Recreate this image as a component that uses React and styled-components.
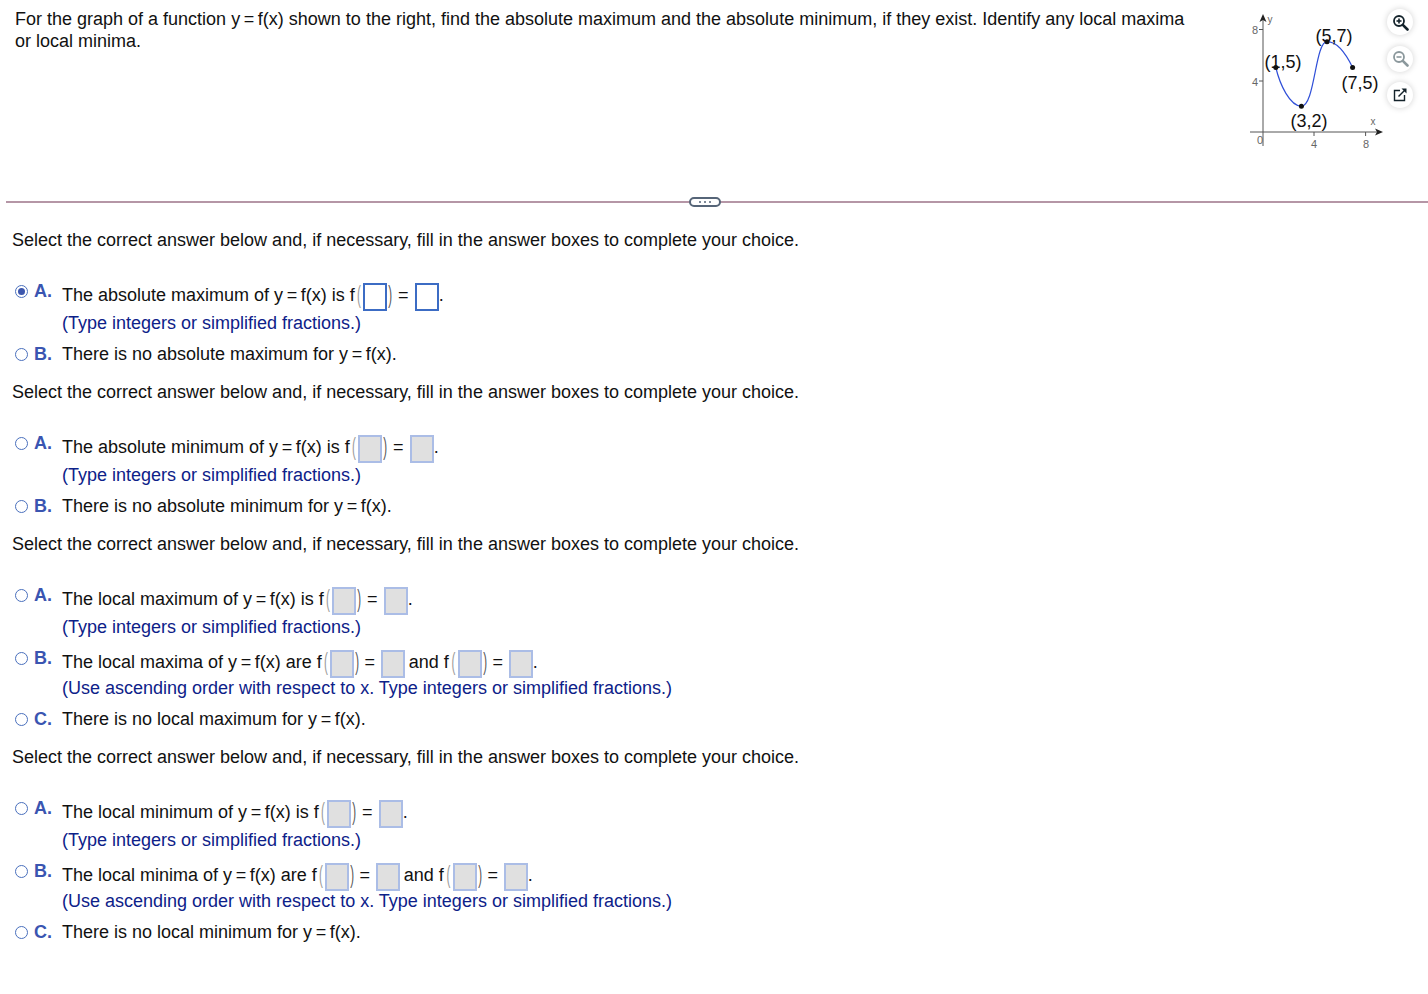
import React from 'react';
import styled, { createGlobalStyle } from 'styled-components';

const GlobalStyle = createGlobalStyle`
  html, body { margin: 0; padding: 0; background: #fff; }
  body {
    font-family: "Liberation Sans", Arial, sans-serif;
    font-size: 18px;
    color: #111;
  }
`;

const Page = styled.div`
  width: 1428px;
  height: 994px;
  overflow: hidden;
`;

const Header = styled.header`
  display: flex;
  height: 196px;
  padding-left: 15px;
`;

const Question = styled.p`
  width: 1228px;
  margin: 8px 0 0;
  padding-right: 40px;
  box-sizing: border-box;
  line-height: 22px;
`;

const GraphSvg = styled.svg`
  display: block;
  width: 143px;
  height: 160px;
  flex: none;
  text { font-family: "Liberation Sans", Arial, sans-serif; }
`;

const Tools = styled.div`
  display: flex;
  flex-direction: column;
  gap: 10.500px;
  padding: 9px 0 0 1px;
`;

const ToolButton = styled.button`
  width: 26px;
  height: 26px;
  padding: 0;
  border: 0;
  border-radius: 50%;
  background: #fff;
  box-shadow: 0 0 6px rgba(0, 0, 0, 0.18);
  display: flex;
  align-items: center;
  justify-content: center;
  color: ${p => (p.$muted ? '#8b989c' : '#14232b')};
`;

const Divider = styled.div`
  position: relative;
  height: 2px;
  margin: 5px 0 0 6px;
  background: #b596a6;
`;

const Pill = styled.div`
  position: absolute;
  left: 683px;
  top: -4px;
  width: 32px;
  height: 10px;
  box-sizing: border-box;
  border: 2px solid #566578;
  border-radius: 5px;
  background: #fff;
  display: flex;
  align-items: center;
  justify-content: center;
  gap: 3px;
  i {
    width: 2px;
    height: 2px;
    border-radius: 50%;
    background: #566578;
  }
`;

const Sections = styled.div`
  padding-top: 26px;
`;

const Section = styled.section`
  padding: 0 0 12px 12px;
`;

const Prompt = styled.p`
  margin: 0 0 29px;
  line-height: 22px;
`;

const Option = styled.div`
  display: grid;
  grid-template-columns: 22px 28px 1fr;
  margin-top: ${p => p.$top || 0}px;
`;

const Radio = styled.span`
  width: 13px;
  height: 13px;
  margin: ${p => (p.$lift ? 5 : 9)}px 0 0 3px;
  box-sizing: border-box;
  border: 1.500px solid #4a70bd;
  border-radius: 50%;
  background: #fff;
  display: flex;
  align-items: center;
  justify-content: center;
  &::after {
    content: '';
    display: ${p => (p.$checked ? 'block' : 'none')};
    width: 7px;
    height: 7px;
    border-radius: 50%;
    background: #3d57ad;
  }
`;

const Letter = styled.span`
  font-weight: 700;
  color: #3a55b1;
  line-height: 30px;
  margin-top: ${p => (p.$lift ? -4 : 0)}px;
`;

const Content = styled.div`
  min-width: 0;
`;

const Line = styled.div`
  height: 30px;
  line-height: 30px;
  display: flex;
  align-items: center;
  white-space: pre;
`;

const Note = styled.div`
  color: #0d2189;
  line-height: 24px;
  margin-top: ${p => p.$top}px;
`;

const AnswerBox = styled.span`
  flex: none;
  align-self: flex-end;
  width: 24px;
  height: 28px;
  margin-bottom: -1px;
  box-sizing: border-box;
  border: 2px solid ${p => (p.$active ? '#3c6cc4' : '#abbde6')};
  background: ${p => (p.$active ? '#fff' : '#e0e0e0')};
`;

const Paren = styled.span`
  flex: none;
  width: ${p => p.$w}px;
  font-size: 23px;
  color: ${p => p.$color};
  transform: scaleX(0.5);
  line-height: 27px;
  text-align: center;
`;

const Gap = styled.span`
  flex: none;
  width: ${p => p.$w}px;
  text-align: center;
`;

function Boxes({ active, prefix, lead, eq }) {
  return (
    <>
      <span>{prefix}</span>
      <Paren $w={lead} $color="#999">(</Paren>
      <AnswerBox $active={active} />
      <Paren $w={5} $color="#555">)</Paren>
      <Gap $w={eq}>=</Gap>
      <AnswerBox $active={active} />
    </>
  );
}

function Expression({ parts, active }) {
  return (
    <Line>
      <Boxes active={active} prefix={parts[0]} lead={8} eq={parts[1] ? 22 : 23} />
      {parts[1] ? (
        <>
          <Gap $w={4} />
          <Boxes prefix={parts[1]} lead={9} eq={22} />
        </>
      ) : null}
      <span>.</span>
    </Line>
  );
}

function Magnifier({ plus, minus }) {
  return (
    <svg width="17" height="17" viewBox="0 0 17 17" fill="none" stroke="currentColor">
      <circle cx="7" cy="7" r="5" strokeWidth="1.800" />
      <path d="M10.800 10.800L15.500 15.500" strokeWidth="2.600" strokeLinecap="round" />
      {minus ? <path d="M4.500 7H9.500" strokeWidth="1.600" /> : null}
      {plus ? <path d="M7 4.500V9.500" strokeWidth="1.600" /> : null}
    </svg>
  );
}

function PopOut() {
  return (
    <svg width="16" height="16" viewBox="0 0 16 16" fill="none" stroke="currentColor">
      <path d="M8 3.500H2.500V13.500H12.500V8" strokeWidth="1.400" />
      <path d="M6.500 9.500L12.500 3.500" strokeWidth="1.400" />
      <path d="M9.500 1.500H14.500V6.500z" fill="currentColor" stroke="none" />
    </svg>
  );
}

const QUESTION = 'For the graph of a function y\u2009=\u2009f(x) shown to the right, find the absolute maximum and the absolute minimum, if they exist. Identify any local maxima or local minima.';
const TYPE_NOTE = '(Type integers or simplified fractions.)';
const ORDER_NOTE = '(Use ascending order with respect to x. Type integers or simplified fractions.)';

const SECTIONS = [
  [
    { letter: 'A.', checked: true, lift: true, active: true, parts: ['The absolute maximum of y\u2009=\u2009f(x) is f'], note: TYPE_NOTE, noteTop: 1 },
    { letter: 'B.', top: 4, text: 'There is no absolute maximum for y\u2009=\u2009f(x).' },
  ],
  [
    { letter: 'A.', lift: true, parts: ['The absolute minimum of y\u2009=\u2009f(x) is f'], note: TYPE_NOTE, noteTop: 1 },
    { letter: 'B.', top: 4, text: 'There is no absolute minimum for y\u2009=\u2009f(x).' },
  ],
  [
    { letter: 'A.', lift: true, parts: ['The local maximum of y\u2009=\u2009f(x) is f'], note: TYPE_NOTE, noteTop: 1 },
    { letter: 'B.', lift: true, top: 8, parts: ['The local maxima of y\u2009=\u2009f(x) are f', 'and f'], note: ORDER_NOTE, noteTop: -1 },
    { letter: 'C.', top: 4, text: 'There is no local maximum for y\u2009=\u2009f(x).' },
  ],
  [
    { letter: 'A.', lift: true, parts: ['The local minimum of y\u2009=\u2009f(x) is f'], note: TYPE_NOTE, noteTop: 1 },
    { letter: 'B.', lift: true, top: 8, parts: ['The local minima of y\u2009=\u2009f(x) are f', 'and f'], note: ORDER_NOTE, noteTop: -1 },
    { letter: 'C.', top: 4, text: 'There is no local minimum for y\u2009=\u2009f(x).' },
  ],
];

function Graph() {
  const axis = '#555';
  const tick = '#666';
  return (
    <GraphSvg viewBox="0 0 143 160">
      <path d="M20 16V146M7 132H137" fill="none" stroke={axis} strokeWidth="1" />
      <path d="M20 14l-3.500 8 3.500-2 3.500 2zM140 132l-8-3.500 2 3.500-2 3.500z" fill="#222" />
      <path d="M16 29.500h4M16 81h4M71 132v4M122.600 132v4" fill="none" stroke={axis} strokeWidth="1" />
      <path
        d="M32.800 67.500C37 85 47 106 58.400 106.200C72 106 72 42 84 41.700C94 41.500 103 54 109.600 67.500"
        fill="none"
        stroke="#2f4fd8"
        strokeWidth="1.200"
      />
      <circle cx="32.800" cy="67.500" r="2.500" fill="#111" />
      <circle cx="58.400" cy="106.200" r="2.500" fill="#111" />
      <circle cx="84" cy="41.700" r="2.500" fill="#111" />
      <circle cx="109.600" cy="67.500" r="2.500" fill="#111" />
      <g fontSize="11" fill={tick} textAnchor="middle">
        <text x="12" y="34">8</text>
        <text x="12" y="86">4</text>
        <text x="17" y="144">0</text>
        <text x="71" y="148">4</text>
        <text x="123" y="148">8</text>
        <text x="27" y="23" fontSize="10">y</text>
        <text x="130" y="125" fontSize="10">x</text>
      </g>
      <g fontSize="18" fill="#111" textAnchor="middle">
        <text x="40" y="68">(1,5)</text>
        <text x="91" y="42">(5,7)</text>
        <text x="117" y="89">(7,5)</text>
        <text x="66" y="127">(3,2)</text>
      </g>
    </GraphSvg>
  );
}

export default function App() {
  return (
    <Page>
      <GlobalStyle />
      <Header>
        <Question>{QUESTION}</Question>
        <Graph />
        <Tools>
          <ToolButton><Magnifier plus minus /></ToolButton>
          <ToolButton $muted><Magnifier minus /></ToolButton>
          <ToolButton><PopOut /></ToolButton>
        </Tools>
      </Header>
      <Divider>
        <Pill><i /><i /><i /></Pill>
      </Divider>
      <Sections>
        {SECTIONS.map((options, i) => (
          <Section key={i}>
            <Prompt>
              Select the correct answer below and, if necessary, fill in the answer boxes to complete your choice.
            </Prompt>
            {options.map(opt => (
              <Option key={opt.letter} $top={opt.top}>
                <Radio $checked={opt.checked} $lift={opt.lift} />
                <Letter $lift={opt.lift}>{opt.letter}</Letter>
                <Content>
                  {opt.parts ? <Expression parts={opt.parts} active={opt.active} /> : <Line>{opt.text}</Line>}
                  {opt.note ? <Note $top={opt.noteTop}>{opt.note}</Note> : null}
                </Content>
              </Option>
            ))}
          </Section>
        ))}
      </Sections>
    </Page>
  );
}
